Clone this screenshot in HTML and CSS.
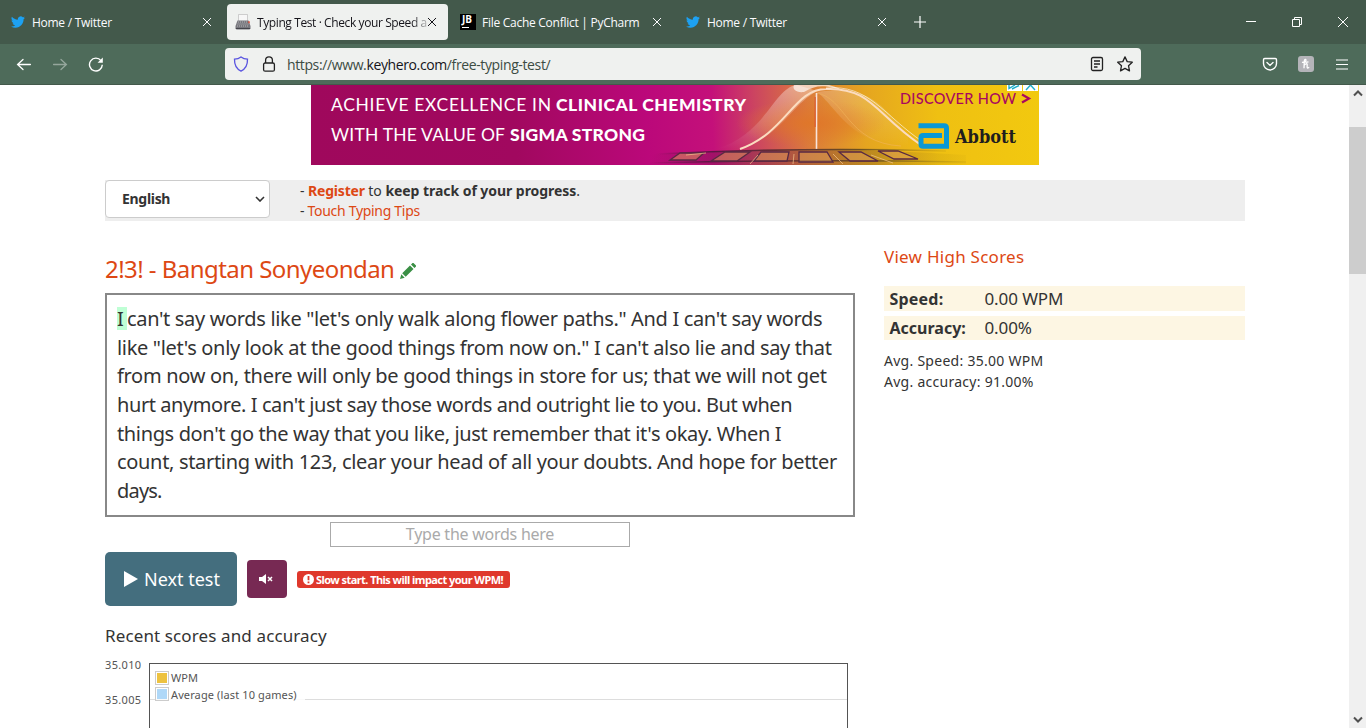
FILE: index.html
```
<!DOCTYPE html>
<html lang="en">
<head>
<meta charset="utf-8">
<title>Typing Test · Check your Speed and Accuracy</title>
<link rel="stylesheet" href="styles.css">
</head>
<body>
<svg class="defs" width="0" height="0">
  <symbol id="bird" viewBox="0 0 24 24"><path d="M23.95 4.57a10 10 0 0 1-2.82.77 4.96 4.96 0 0 0 2.16-2.72c-.95.55-2 .95-3.13 1.18a4.92 4.92 0 0 0-8.38 4.48C7.69 8.1 4.07 6.13 1.64 3.16a4.92 4.92 0 0 0 1.52 6.57 4.9 4.9 0 0 1-2.23-.61v.06c0 2.39 1.7 4.38 3.95 4.83a5 5 0 0 1-2.21.08 4.94 4.94 0 0 0 4.6 3.42A9.87 9.87 0 0 1 0 19.54a13.99 13.99 0 0 0 7.55 2.21c9.05 0 14-7.5 14-13.98 0-.21 0-.42-.02-.63a9.94 9.94 0 0 0 2.46-2.55z"/></symbol>
  <symbol id="x" viewBox="0 0 10 10"><path d="M1 1l8 8M9 1l-8 8" fill="none" stroke="currentColor" stroke-width="1"/></symbol>
</svg>

<header class="tabs">
  <div class="tab">
    <svg class="fav bird" viewBox="0 0 24 24"><use href="#bird"/></svg>
    <span class="tab-title">Home / Twitter</span>
    <svg class="tab-x"><use href="#x"/></svg>
  </div>
  <div class="tab active">
    <svg class="fav" viewBox="0 0 16 16"><path d="M3.500.5h9v8h-9z" fill="#f7f7f7" stroke="#bbb" stroke-width=".7"/><path d="M2.500 6.500h11l2 5.500v2.500l-1 1h-13l-1-1V12z" fill="#77777d"/><path d="M3 8h10M2.500 10h11M2 12h12" stroke="#b5b5b8" stroke-dasharray="1 1"/><path d="M1 14.500h14" stroke="#45454c"/><path d="M14 7.200v2" stroke="#e0503c" stroke-width="1.500"/></svg>
    <span class="tab-title fade t2">Typing Test · Check your Speed a</span>
    <svg class="tab-x"><use href="#x"/></svg>
  </div>
  <div class="tab">
    <span class="jb"><b>JB</b><i></i></span>
    <span class="tab-title t3">File Cache Conflict | PyCharm</span>
    <svg class="tab-x"><use href="#x"/></svg>
  </div>
  <div class="tab">
    <svg class="fav bird" viewBox="0 0 24 24"><use href="#bird"/></svg>
    <span class="tab-title">Home / Twitter</span>
    <svg class="tab-x"><use href="#x"/></svg>
  </div>
  <svg class="plus" viewBox="0 0 12 12"><path d="M6 0v12M0 6h12" stroke="#fff" stroke-width="1.200"/></svg>
  <div class="win">
    <svg viewBox="0 0 10 10"><path d="M0 4.500h10" stroke="#fff"/></svg>
    <svg viewBox="0 0 10 10" fill="none" stroke="#fff"><path d="M.5 2.500h7v7h-7zM2.500 2.500v-2h7v7h-2"/></svg>
    <svg viewBox="0 0 10 10"><path d="M0 0l10 10M10 0L0 10" stroke="#fff"/></svg>
  </div>
</header>

<div class="toolbar">
  <div class="nav">
    <svg viewBox="0 0 16 16" fill="none" stroke="#fff" stroke-width="1.300" stroke-linecap="round"><path d="M14.400 8.500H1.600M7 3.500L1.600 8.500 7 13.500"/></svg>
    <svg class="dim" viewBox="0 0 16 16" fill="none" stroke="#fff" stroke-width="1.300" stroke-linecap="round"><path d="M1.600 8.500h12.800M9 3.500l5.400 5L9 13.500"/></svg>
    <svg viewBox="0 0 16 16" fill="none" stroke="#fff" stroke-width="1.400"><path d="M14.300 8.800A6.400 6.400 0 1 1 13 4.700"/><path d="M14.800 1.500v5.200H9.600z" fill="#fff" stroke="none"/></svg>
  </div>
  <div class="urlbar">
    <svg class="ic" viewBox="0 0 16 16" fill="none" stroke="#5a55e0" stroke-width="1.300"><path d="M8 .9C6 2.400 4 3 1.500 3.100c-.2 5.500 1 9.500 6.500 12 5.500-2.500 6.700-6.500 6.500-12C12 3 10 2.400 8 .9z"/></svg>
    <svg class="ic lock" viewBox="0 0 16 16" fill="none" stroke="#222" stroke-width="1.300"><rect x="2.600" y="7" width="10.800" height="8.200" rx="1.500"/><path d="M4.600 7V4.200a3.400 3.400 0 0 1 6.800 0V7"/></svg>
    <span class="url">https://www.<b>keyhero.com</b>/free-typing-test/</span>
    <svg class="ic reader" viewBox="0 0 16 16" fill="none" stroke="#222" stroke-width="1.300"><rect x="2.500" y="1.500" width="11" height="13" rx="1.500"/><path d="M5 5h6M5 8h6M5 11h3.500"/></svg>
    <svg class="ic star" viewBox="0 0 16 16" fill="none" stroke="#222" stroke-width="1.300" stroke-linejoin="round"><path d="M8 .9l2.200 4.700 5.100.6-3.800 3.500 1 5.200L8 12.400l-4.500 2.500 1-5.200L.7 6.200l5.100-.6z"/></svg>
  </div>
  <div class="tools">
    <svg viewBox="0 0 16 16" fill="none" stroke="#fff" stroke-width="1.400" stroke-linecap="round"><path d="M2.700 2.500h10.600q1.200 0 1.200 1.200V7.500a6.500 6.500 0 0 1-13 0V3.700q0-1.200 1.200-1.200zM5 6.500l3 2.900 3-2.900"/></svg>
    <svg viewBox="0 0 16 16"><rect width="16" height="16" rx="3" fill="#b4b4b9"/><path d="M4 6.200c1.500.6 4-.6 4-2 0-1.200-1.600-1-1.700.8L6 12.300M6.200 9.300c.8-1.600 3-2.200 3-.6 0 1.500-.4 3.300.6 3.300.6 0 1-.4 1.300-.8M7.500 6.300l3-.5" fill="none" stroke="#fff" stroke-width="1.300"/></svg>
    <svg class="menu" viewBox="0 0 12 11"><path d="M0 1h12M0 5.500h12M0 10h12" stroke="#fff" stroke-width="1.200"/></svg>
  </div>
</div>

<div class="viewport">
  <main class="page">
    <svg class="ad" viewBox="0 0 728 80">
      <defs>
        <linearGradient id="g" gradientUnits="userSpaceOnUse" x1="0" y1="30" x2="728" y2="0"><stop offset="0" stop-color="#9f085c"/><stop offset=".28" stop-color="#a1085f"/><stop offset=".46" stop-color="#bb087a"/><stop offset=".55" stop-color="#c4107a"/><stop offset=".61" stop-color="#cc4560"/><stop offset=".68" stop-color="#db7a3c"/><stop offset=".76" stop-color="#e5a520"/><stop offset=".86" stop-color="#efc012"/><stop offset="1" stop-color="#f2c90f"/></linearGradient>
        <linearGradient id="s" x1="0" x2="0" y1="0" y2="1"><stop offset="0" stop-color="#fff" stop-opacity=".38"/><stop offset="1" stop-color="#fff" stop-opacity="0"/></linearGradient>
        <linearGradient id="f"><stop offset="0" stop-color="#5e1544" stop-opacity="0"/><stop offset=".2" stop-color="#5e1544"/><stop offset=".7" stop-color="#6b5020"/><stop offset="1" stop-color="#aa8a10" stop-opacity=".2"/></linearGradient>
        <radialGradient id="o"><stop offset="0" stop-color="#e07628" stop-opacity=".9"/><stop offset="1" stop-color="#e07628" stop-opacity="0"/></radialGradient>
      </defs>
      <rect width="728" height="80" fill="url(#g)"/>
      <ellipse cx="500" cy="38" rx="75" ry="24" fill="url(#o)"/>
      <path d="M405 64C455 50 463 2 486 0l20 6C480 20 470 52 429 64z" fill="url(#s)"/>
      <path d="M506 7C524 20 540 61 597 62V50C570 20 560 0 506 7z" fill="url(#s)" opacity=".55"/>
      <path d="M483 0h35c14 4 12 5 5 3-12-3-20-2-30 4-8 1-12-3-10-7z" fill="#fff" opacity=".65"/>
      <path d="M429 64C475 48 483 4 515 4C560 2 565 30 610 60" fill="none" stroke="#fbdcc0" stroke-width="2"/>
      <path d="M505 8C535 12 535 58 590 61" fill="none" stroke="#f2b45a" stroke-opacity=".6"/>
      <path d="M515 3C558-1 572 30 612 57" fill="none" stroke="#fff" stroke-opacity=".6"/>
      <path d="M505.500 8v56" stroke="#f8e4dc" stroke-width="1.600"/><path d="M504.200 12v30" stroke="#d6452d" stroke-width=".8"/>
      <path d="M340 70Q480 59 655 70L655 79Q500 84 340 78z" fill="url(#f)" opacity=".33"/>
      <g fill="none" stroke="url(#f)" stroke-width="1.600"><path d="M345 69Q490 62 635 66"/><path d="M338 78Q500 74 655 77"/></g>
      <g fill="#e4a258" fill-opacity=".5" stroke="#582943" stroke-width="1.300"><path d="M369 68h24l-8 7h-26zM414 67h25l-13 9h-26zM450 67h28l-2 9h-33zM488 67h28l6 10h-34zM528 67h22l17 9h-28zM567 66h20l20 8h-24z"/></g>
      <path d="M375 70l20-2M447 70l-8 9M483 69l-1 10M522 69l10 10M560 70l22 8" stroke="#f5c58c" opacity=".7"/>
      <g class="ad-copy">
        <text x="20" y="26" textLength="220">ACHIEVE EXCELLENCE IN</text><text class="heavy" x="245" y="26" textLength="190">CLINICAL CHEMISTRY</text>
        <text x="20" y="56" textLength="174">WITH THE VALUE OF</text><text class="heavy" x="199" y="56" textLength="135">SIGMA STRONG</text>
      </g>
      <text class="discover" x="589" y="19" textLength="116">DISCOVER HOW</text>
      <path d="M711 9.500l7 4-7 4" fill="none" stroke="#a9075f" stroke-width="2.200"/>
      <path d="M607.500 40.700H633q2.500 0 2.500 2.500V61.300H612q-2 0-2-2V52.500q0-2 2-2h19" fill="none" stroke="#0a98d5" stroke-width="5"/>
      <text class="abbott" x="644" y="58" textLength="61" lengthAdjust="spacingAndGlyphs">Abbott</text>
      <path d="M696 0h15v6h-15zM712 0h15v6h-15z" fill="#fff"/>
      <path d="M698 0v3.500l6-3.500M701 4l7-3.500M715 5l4.500-5 4.500 5" fill="none" stroke="#20aeca" stroke-width="1.400"/>
    </svg>

    <section class="bar">
      <div class="select"><b>English</b><svg viewBox="0 0 10 6"><path d="M1 1l4 4 4-4" fill="none" stroke="#333" stroke-width="1.600"/></svg></div>
      <div class="tips">
        <div>- <a class="reg">Register</a> to <b>keep track of your progress</b>.</div>
        <div class="tt">- <a>Touch Typing Tips</a></div>
      </div>
    </section>

    <div class="cols">
      <section class="left">
        <h1><span>2!3! - Bangtan Sonyeondan</span><svg viewBox="0 0 16 16" fill="#3a8f45"><path d="M0 16l1.300-4.700 3.400 3.400zM2.200 10.300L10 2.500 13.500 6l-7.800 7.800zM11 1.500L12.500 0h1L16 2.500v1L14.500 5z"/></svg></h1>
        <div class="quote">
          <div class="l1"><mark>I </mark>can't say words like "let's only walk along flower paths." And I can't say words</div>
          <div class="l2">like "let's only look at the good things from now on." I can't also lie and say that</div>
          <div class="l3">from now on, there will only be good things in store for us; that we will not get</div>
          <div class="l4">hurt anymore. I can't just say those words and outright lie to you. But when</div>
          <div class="l5">things don't go the way that you like, just remember that it's okay. When I</div>
          <div class="l6">count, starting with 123, clear your head of all your doubts. And hope for better</div>
          <div class="l7">days.</div>
        </div>
        <div class="entry"><span>Type the words here</span></div>
        <div class="actions">
          <div class="next"><svg viewBox="0 0 14 16"><path d="M0 0l14 8-14 8z" fill="#fff"/></svg><span>Next test</span></div>
          <div class="mute"><svg viewBox="0 0 14 10"><path d="M0 3h3l4-3v10L3 7H0z" fill="#fff"/><path d="M9 3l4 4M13 3L9 7" stroke="#fff" stroke-width="1.500"/></svg></div>
          <div class="warn"><svg viewBox="0 0 11 11"><circle cx="5.500" cy="5.500" r="5.500" fill="#fff"/><path d="M5.500 2v4.300M5.500 7.500v1.700" stroke="#df382c" stroke-width="1.800"/></svg><b>Slow start. This will impact your WPM!</b></div>
        </div>
        <h2><span>Recent scores and accuracy</span></h2>
        <div class="chart">
          <div class="axis"><span>35.010</span><span>35.005</span></div>
          <div class="plot">
            <div class="legend"><div><i class="y"></i><span class="g1">WPM</span></div><div><i class="bl"></i><span class="g2">Average (last 10 games)</span></div></div>
          </div>
        </div>
      </section>
      <aside>
        <a class="high">View High Scores</a>
        <div class="stat"><b class="k1">Speed:</b><span class="v1">0.00 WPM</span></div>
        <div class="stat s2"><b class="k2">Accuracy:</b><span class="v2">0.00%</span></div>
        <div class="avg"><div class="a1">Avg. Speed: 35.00 WPM</div><div class="a2">Avg. accuracy: 91.00%</div></div>
      </aside>
    </div>
  </main>
  <div class="scroll">
    <svg viewBox="0 0 10 7"><path d="M1 5.500l4-4 4 4" fill="none" stroke="#505050" stroke-width="2"/></svg>
    <div class="thumb"></div>
    <svg class="down" viewBox="0 0 10 7"><path d="M1 1.500l4 4 4-4" fill="none" stroke="#505050" stroke-width="2"/></svg>
  </div>
</div>
</body>
</html>
```
FILE: styles.css
```
* { box-sizing: border-box; }
body { margin: 0; width: 1366px; height: 728px; overflow: hidden; background: #fff; color: #333; font: 14px/20px "Noto Sans", sans-serif; white-space: nowrap; display: flex; flex-direction: column; }
svg { display: block; flex: none; }
.defs { display: none; }
a { color: #dd4814; }

.tabs { height: 44px; flex: none; display: flex; align-items: center; background: #43594b; color: #fbfbfe; font: 12px/16px "Open Sans", sans-serif; padding-left: 2px; }
.tab { width: 221px; height: 36px; margin-right: 4px; border-radius: 4px; display: flex; align-items: center; padding: 0 10px 0 8px; }
.active { background: #eff1ef; color: #15141a; }
.fav { width: 16px; height: 16px; margin-right: 6px; }
.bird { fill: #1da1f2; width: 14px; height: 14px; margin: 0 7px 0 1px; }
.tab-title { flex: 1; min-width: 0; letter-spacing: -.27px; padding-top: 2px; }
.t2 { letter-spacing: -.4px; }
.t3 { letter-spacing: -.27px; }
.fade { -webkit-mask-image: linear-gradient(90deg, #000 91%, transparent 103%); mask-image: linear-gradient(90deg, #000 91%, transparent 103%); }
.tab-x { width: 10px; height: 10px; margin-right: 1px; }
.jb { width: 16px; height: 16px; background: #000; margin-right: 6px; padding: 1px 0 0 2px; display: flex; flex-direction: column; }
.jb b { font: bold 10px/9px "Open Sans", sans-serif; color: #fff; }
.jb i { width: 7px; height: 1px; background: #fff; margin-top: 3px; }
.plus { width: 12px; height: 12px; margin-left: 12px; }
.win { margin: 0 18px 0 auto; display: flex; gap: 36px; }
.win svg { width: 10px; height: 10px; }

.toolbar { height: 41px; flex: none; background: #4e6b5a; border-bottom: 1px solid #43594b; display: flex; align-items: center; }
.nav { width: 225px; padding-left: 16px; display: flex; gap: 20px; }
.nav svg { width: 16px; height: 16px; }
.nav .dim { opacity: .4; }
.urlbar { width: 916px; height: 32px; border-radius: 4px; background: #eff1ef; display: flex; align-items: center; padding: 0 8px; color: #3c4c43; font: 14px/20px "Open Sans", sans-serif; }
.ic { width: 16px; height: 16px; }
.lock { margin: 0 10px 0 12px; }
.url { flex: 1; letter-spacing: -.38px; padding-top: 2px; }
.url b { font-weight: 400; color: #15141a; }
.reader { margin-right: 12px; }
.tools { margin: 0 18px 0 auto; display: flex; align-items: center; gap: 20px; }
.tools svg { width: 16px; height: 16px; }
.tools .menu { width: 12px; height: 11px; margin-left: 2px; }

.viewport { flex: 1; display: flex; min-height: 0; }
.page { width: 1349px; padding: 0 104px 0 105px; overflow: hidden; }
.ad { width: 728px; height: 80px; margin-left: 206px; }
.ad text { font-family: Lato, sans-serif; fill: #fff; }
.ad-copy text { font-size: 17.5px; }
.ad-copy .heavy { font-weight: 900; font-size: 17.5px; }
.ad .discover { fill: #a9075f; font-size: 14.5px; font-weight: 500; }
.ad .abbott { font: bold 19px "DejaVu Serif", serif; fill: #211d1e; }

.bar { margin-top: 15px; height: 41px; background: #eee; display: flex; }
.select { width: 165px; height: 38px; border: 1px solid #ccc; border-radius: 4px; background: #fff; display: flex; align-items: center; justify-content: space-between; padding: 0 4px 0 16px; letter-spacing: -.3px; }
.select svg { width: 10px; height: 6px; }
.tips { padding: 1px 0 0 30px; line-height: 20px; }
.tips > div { letter-spacing: -.05px; }
.tips .tt { letter-spacing: -.3px; }
.reg { font-weight: 700; letter-spacing: -.2px; }

.cols { display: flex; justify-content: space-between; }
.left { width: 750px; }
h1 { margin: 33px 0 0; height: 39px; font: 24px/30px "Noto Sans", sans-serif; color: #dd4814; display: flex; gap: 6px; letter-spacing: -.55px; }
h1 svg { width: 16px; height: 16px; margin-top: 9px; }
.quote { height: 224px; border: 2px solid #888; padding: 10.3px 10px; font-size: 20px; line-height: 28.57px; }
.l1 { letter-spacing: -.34px; }
.l2 { letter-spacing: -.335px; }
.l3 { letter-spacing: -.31px; }
.l4 { letter-spacing: -.42px; }
.l5 { letter-spacing: -.36px; }
.l6 { letter-spacing: -.32px; }
.l7 { letter-spacing: -.8px; }
mark { background: #bfffd5; color: inherit; padding: 0; display: inline-block; width: 10px; height: 23px; line-height: 23px; white-space: pre; }
.entry { width: 300px; height: 25px; margin: 5px auto; border: 1px solid #aaa; color: #aaa; font-size: 16px; line-height: 23px; text-align: center; letter-spacing: -.25px; }
.actions { display: flex; align-items: center; gap: 10px; height: 54px; color: #fff; }
.next { width: 132px; height: 54px; background: #446e7e; border-radius: 5px; display: flex; align-items: center; padding: 0 18px 0 19px; gap: 6px; font-size: 18px; }
.next svg { width: 14px; height: 16px; }
.mute { width: 40px; height: 38px; background: #772953; border-radius: 4px; display: flex; align-items: center; padding-left: 12px; }
.mute svg { width: 14px; height: 10px; }
.warn { width: 213px; height: 17px; background: #df382c; border-radius: 3px; display: flex; align-items: center; padding-left: 6px; gap: 2px; font-size: 11px; line-height: 17px; letter-spacing: -.55px; }
.warn svg { width: 11px; height: 11px; }
h2 { margin: 20px 0 17px; font: 17px/20px "Noto Sans", sans-serif; letter-spacing: .12px; }
.chart { display: flex; color: #545454; font-size: 11px; line-height: 14px; }
.axis { width: 44px; display: flex; flex-direction: column; gap: 21px; margin-top: -5px; letter-spacing: .35px; }
.plot { width: 699px; height: 120px; border: 1px solid #545454; background: linear-gradient(#ddd, #ddd) 0 35px / 100% 1px no-repeat; padding: 6px 5px; }
.legend { background: rgba(255,255,255,.85); width: 150px; display: flex; flex-direction: column; gap: 2px; margin-top: 1px; }
.legend div { display: flex; gap: 2px; height: 14px; letter-spacing: .12px; }
.legend .g2 { padding-top: 1px; }
.legend i { width: 14px; height: 14px; border: 1px solid #ccc; padding: 1px; background-clip: content-box; }
.y { background-color: #edc240; }
.bl { background-color: #afd8f8; }

aside { width: 361px; padding-top: 26px; }
.high { display: block; font-size: 17px; line-height: 20px; margin-bottom: 19px; letter-spacing: .26px; }
.stat { height: 25px; background: #fdf6e3; display: flex; align-items: center; padding-left: 5.5px; font-size: 17px; letter-spacing: -.1px; }
.stat b { width: 95px; font-size: 16px; letter-spacing: .2px; }
.stat .k2 { letter-spacing: 0; }
.s2 { height: 24px; margin: 5px 0 10px; }
.avg { font-size: 14px; line-height: 21px; letter-spacing: .27px; }

.scroll { width: 17px; background: #f0f0f0; display: flex; flex-direction: column; align-items: center; padding: 5px 0; }
.scroll svg { width: 10px; height: 7px; }
.thumb { width: 17px; height: 147px; background: #cdcdcd; margin-top: 30px; }
.scroll .down { margin-top: auto; }
```
